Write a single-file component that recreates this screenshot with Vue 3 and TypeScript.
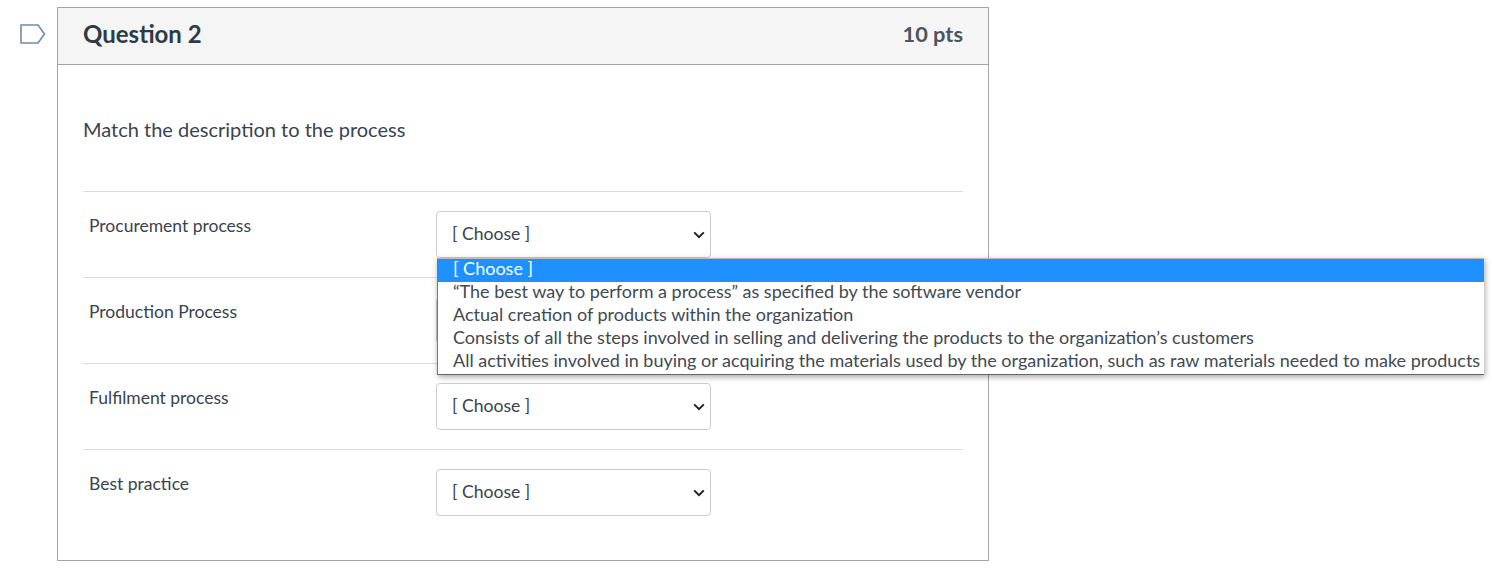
<script setup lang="ts">
const rows: string[] = ['Procurement process', 'Production Process', 'Fulfilment process', 'Best practice']
const options: string[] = [
  '[ Choose ]',
  '“The best way to perform a process” as specified by the software vendor',
  'Actual creation of products within the organization',
  'Consists of all the steps involved in selling and delivering the products to the organization’s customers',
  'All activities involved in buying or acquiring the materials used by the organization, such as raw materials needed to make products',
]
</script>

<template>
  <div class="page">
    <div class="flag-col">
      <svg class="flag" width="26" height="20" viewBox="0 0 26 20" aria-hidden="true">
        <path d="M1 1H18L24.5 10L18 19H1Z" fill="#fff" stroke="#6f8ea8" stroke-width="1.6" />
      </svg>
    </div>
    <section class="card">
      <header class="head">
        <h2 class="title">Question 2</h2>
        <span class="pts">10 pts</span>
      </header>
      <div class="body">
        <p class="prompt">Match the description to the process</p>
        <div v-for="r in rows" :key="r" class="row">
          <div class="label">{{ r }}</div>
          <select class="pick">
            <option>[ Choose ]</option>
          </select>
        </div>
      </div>
    </section>
    <ul class="menu">
      <li v-for="(o, i) in options" :key="o" class="opt" :class="{ on: i === 0 }">{{ o }}</li>
    </ul>
  </div>
</template>

<style>
html, body { background: #fff; }
</style>

<style scoped>
.page {
  position: relative;
  width: 1492px;
  height: 570px;
  overflow: hidden;
  display: flex;
  padding: 7px 0 0 20px;
  box-sizing: border-box;
  font-family: Lato, "Liberation Sans", sans-serif;
  color: #2d3b45;
  font-variant-ligatures: common-ligatures;
}
.flag-col { width: 37px; flex: none; padding-top: 17px; }
.flag { display: block; }
.card {
  width: 932px;
  height: 554px;
  box-sizing: border-box;
  border: 1px solid #a5a5a5;
  flex: none;
}
.head {
  height: 57px;
  box-sizing: border-box;
  background: #f5f5f5;
  border-bottom: 1px solid #a5a5a5;
  display: flex;
  align-items: center;
  justify-content: space-between;
  padding: 0 25px 4px;
}
.title { margin: 0; font-size: 24px; font-weight: 700; line-height: 1; }
.pts { font-size: 21.8px; font-weight: 700; color: #4a5560; line-height: 1; }
.body { padding: 0 25px; }
.prompt {
  margin: 0;
  height: 126px;
  box-sizing: border-box;
  padding-top: 51px;
  font-size: 20px;
  line-height: 26px;
  color: #38444d;
}
.row {
  height: 86px;
  box-sizing: border-box;
  border-top: 1px solid #dcdcdc;
  display: flex;
  padding: 19px 0 0 6px;
}
.label { width: 347px; flex: none; font-size: 17.5px; line-height: 26px; color: #38444d; padding-top: 2px; }
.pick {
  appearance: none;
  width: 275px;
  height: 47px;
  box-sizing: border-box;
  background: #fff url("data:image/svg+xml,%3Csvg xmlns='http://www.w3.org/2000/svg' width='12' height='8' viewBox='0 0 12 8'%3E%3Cpath d='M1.2 1.4L6 6.2L10.8 1.4' fill='none' stroke='%23222' stroke-width='2'/%3E%3C/svg%3E") no-repeat right 5px center;
  border: 1px solid #c7cdd1;
  border-radius: 4px;
  padding: 0 11px 3px 15px;
  font: 17.6px Lato, "Liberation Sans", sans-serif;
  color: #38444d;
  outline: none;
}
.menu {
  position: absolute;
  left: 437px;
  top: 258px;
  width: 1047px;
  height: 117px;
  box-sizing: border-box;
  margin: 0;
  padding: 0;
  list-style: none;
  background: #fff;
  border-left: 1px solid #77797b;
  border-bottom: 1px solid #666;
  border-top: 1px solid #bbb;
  box-shadow: 1px 2px 6px rgba(0, 0, 0, 0.35);
  font-size: 18px;
  overflow: hidden;
}
.opt {
  height: 23px;
  line-height: 19px;
  padding-left: 15px;
  white-space: nowrap;
  color: #3f4a52;
}
.opt.on { background: #1e90ff; color: #fff; }
</style>
